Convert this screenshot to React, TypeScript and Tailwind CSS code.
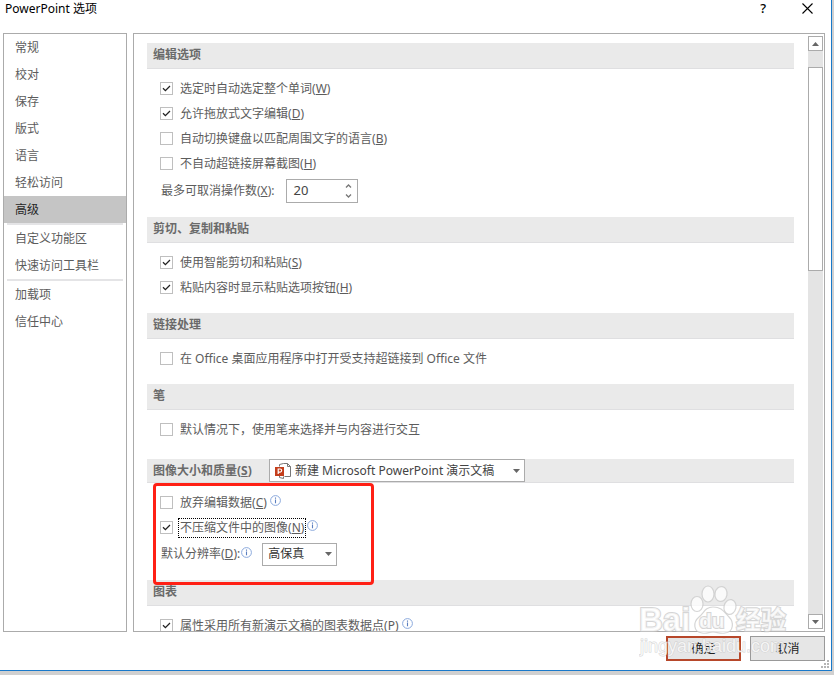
import { useState, type ReactNode } from "react"
import { clsx } from "clsx"

// ── Navigation ────────────────────────────────────────────────────────────────
const navGroups = [
  ["常规", "校对", "保存", "版式", "语言", "轻松访问", "高级"],
  ["自定义功能区", "快速访问工具栏"],
  ["加载项", "信任中心"],
]

function Sidebar() {
  const [active, setActive] = useState("高级")

  return (
    <nav className="w-[124px] shrink-0 border border-[#ababab] bg-white">
      {navGroups.map((group, i) => (
        <div key={group[0]}>
          {i > 0 && <hr className="mx-[3px] h-0.5 border-0 bg-[#e4e4e6]" />}
          {group.map((label) => (
            <button
              key={label}
              type="button"
              onClick={() => setActive(label)}
              className={clsx(
                "block h-[27px] w-full px-[11px] text-left",
                active === label ? "bg-[#c5c5c5] text-[#262626]" : "text-[#5c5c5c]"
              )}
            >
              {label}
            </button>
          ))}
        </div>
      ))}
    </nav>
  )
}

// ── Small pieces ──────────────────────────────────────────────────────────────
function InfoIcon() {
  return (
    <svg className="mb-1 ml-px size-[11px] shrink-0" viewBox="0 0 11 11" fill="none" aria-hidden="true">
      <circle cx="5.5" cy="5.5" r="4.9" stroke="#8aa9dc" />
      <path d="M5.5 4.6v3.6M5.5 2.5v1.2" stroke="#5b7fc0" strokeWidth="1.1" />
    </svg>
  )
}

function PptIcon() {
  return (
    <svg className="size-4" viewBox="0 0 16 16" fill="none" aria-hidden="true">
      <path d="M4.5 3.5v-2l4-1h4l3 3v10h-6" fill="#fff" stroke="#777" />
      <path d="M12.5.5v3h3" stroke="#777" />
      <path d="M4.5 13v1.5l4 1v-2" stroke="#777" />
      <rect x="0" y="4" width="9" height="9" fill="#c43e1c" />
      <path d="M3.2 11V6h1.9a1.5 1.5 0 0 1 0 3.1H3.2" stroke="#fff" strokeWidth="1.2" />
    </svg>
  )
}

function Arrow({ up }: { up?: boolean }) {
  return (
    <svg className="h-1 w-[7px]" viewBox="0 0 7 4" aria-hidden="true">
      <path d={up ? "M0 4 3.5 0 7 4z" : "M0 0h7L3.5 4z"} fill="#666" />
    </svg>
  )
}

function Section({ title, last, children }: { title: ReactNode; last?: boolean; children: ReactNode }) {
  return (
    <section className={clsx("relative", !last && "pb-[13px]")}>
      <h2 className="h-[26px] border-b border-[#dfdfe1] bg-[#eaeaea] px-1.5 leading-6 font-bold text-[#6a6a6a]">
        {title}
      </h2>
      <div className="px-[13px] pt-[7px]">{children}</div>
    </section>
  )
}

interface CheckProps {
  label: string
  hotkey?: string
  checked?: boolean
  info?: boolean
  focused?: boolean
}

function Check({ label, hotkey, checked, info, focused }: CheckProps) {
  return (
    <div className="flex h-[25px] items-center">
      <label className="flex items-center">
        <span className="relative size-[13px]">
          <input
            type="checkbox"
            defaultChecked={checked}
            className="peer block size-[13px] appearance-none border border-[#bfbfbf] bg-white"
          />
          <svg
            className="pointer-events-none absolute inset-0 hidden size-[13px] peer-checked:block"
            viewBox="0 0 13 13"
            fill="none"
          >
            <path d="m3 6.3 2.4 2.4L10 4" stroke="#222" strokeWidth="1.3" />
          </svg>
        </span>
        <span
          className={clsx(
            "ml-[5px] border px-px leading-[18px] whitespace-nowrap",
            focused ? "border-dotted border-black" : "border-transparent"
          )}
        >
          {label}
          {hotkey && (
            <>
              (<u>{hotkey}</u>)
            </>
          )}
        </span>
      </label>
      {info && <InfoIcon />}
    </div>
  )
}

function Spinner() {
  const [value, setValue] = useState(20)

  return (
    <div className="flex h-6 w-[72px] border border-[#ababab] bg-white text-[#444]">
      <input
        id="undo"
        inputMode="numeric"
        value={value}
        onChange={(e) => setValue(Number(e.target.value) || 0)}
        className="w-0 grow pl-1.5 text-[13px] outline-none"
      />
      <div className="flex w-3 flex-col justify-center gap-1.5">
        <button type="button" aria-label="增加" onClick={() => setValue(value + 1)}>
          <svg className="block h-1 w-[7px]" viewBox="0 0 7 4" fill="none">
            <path d="M1 3.5 3.5 1 6 3.5" stroke="#777" strokeWidth="1.3" />
          </svg>
        </button>
        <button type="button" aria-label="减少" onClick={() => setValue(value - 1)}>
          <svg className="block h-1 w-[7px]" viewBox="0 0 7 4" fill="none">
            <path d="M1 .5 3.5 3 6 .5" stroke="#777" strokeWidth="1.3" />
          </svg>
        </button>
      </div>
    </div>
  )
}

// ── Options pane ──────────────────────────────────────────────────────────────
function Options() {
  return (
    <div className="min-w-0 grow overflow-hidden pt-[9px] pr-3.5 pl-[13px]">
      <Section title="编辑选项">
        <Check label="选定时自动选定整个单词" hotkey="W" checked />
        <Check label="允许拖放式文字编辑" hotkey="D" checked />
        <Check label="自动切换键盘以匹配周围文字的语言" hotkey="B" />
        <Check label="不自动超链接屏幕截图" hotkey="H" />
        <div className="flex h-7 items-end gap-3 pb-px pl-px">
          <label htmlFor="undo" className="leading-6">
            最多可取消操作数(<u>X</u>):
          </label>
          <Spinner />
        </div>
      </Section>

      <Section title="剪切、复制和粘贴">
        <Check label="使用智能剪切和粘贴" hotkey="S" checked />
        <Check label="粘贴内容时显示粘贴选项按钮" hotkey="H" checked />
      </Section>

      <Section title="链接处理">
        <Check label="在 Office 桌面应用程序中打开受支持超链接到 Office 文件" />
      </Section>

      <Section title="笔">
        <Check label="默认情况下，使用笔来选择并与内容进行交互" />
      </Section>

      {/* Image size applies per document, so its header carries the picker */}
      <section className="relative pt-1 pb-3">
        <div className="flex h-6 items-center border-b border-[#dfdfe1] bg-[#eaeaea] pl-1.5">
          <label htmlFor="doc" className="w-[116px] font-bold text-[#6a6a6a]">
            图像大小和质量(<u>S</u>)
          </label>
          <div className="relative">
            <select
              id="doc"
              className="block h-[23px] w-[256px] appearance-none border border-[#ababab] bg-white pl-[25px] text-[#444]"
            >
              <option>新建 Microsoft PowerPoint 演示文稿</option>
            </select>
            <span className="pointer-events-none absolute inset-y-0 left-1.5 flex items-center">
              <PptIcon />
            </span>
            <span className="pointer-events-none absolute inset-y-0 right-[5px] flex items-center">
              <Arrow />
            </span>
          </div>
        </div>
        <div className="relative px-[13px] pt-[7px]">
          <Check label="放弃编辑数据" hotkey="C" info />
          <Check label="不压缩文件中的图像" hotkey="N" checked info focused />
          <div className="flex h-7 items-center pl-px">
            <label htmlFor="dpi">
              默认分辨率(<u>D</u>):
            </label>
            <InfoIcon />
            <div className="relative ml-2.5">
              <select
                id="dpi"
                className="block h-[23px] w-[75px] appearance-none border border-[#ababab] bg-white pl-[5px] text-[#333]"
              >
                <option>高保真</option>
              </select>
              <span className="pointer-events-none absolute inset-y-0 right-[5px] flex items-center">
                <Arrow />
              </span>
            </div>
          </div>
          <div className="pointer-events-none absolute top-0 left-1.5 z-10 h-[102px] w-[221px] rounded-sm border-3 border-[#ff2015]" />
        </div>
      </section>

      <Section title="图表" last>
        <Check label="属性采用所有新演示文稿的图表数据点" hotkey="P" checked info />
      </Section>
    </div>
  )
}

function Scrollbar() {
  return (
    <div className="mt-0.5 mr-px mb-0.5 flex w-[15px] shrink-0 flex-col bg-[#e4e4e4]">
      <button type="button" aria-label="向上" className="flex h-[15px] items-center justify-center border border-[#ababab] bg-white">
        <Arrow up />
      </button>
      <div className="mt-4 h-[204px] border border-[#ababab] bg-white" />
      <button type="button" aria-label="向下" className="mt-auto flex h-[15px] items-center justify-center border border-[#ababab] bg-white">
        <Arrow />
      </button>
    </div>
  )
}

function Watermark() {
  return (
    <svg
      className="pointer-events-none absolute right-10 bottom-3 z-20 h-[76px] w-[152px]"
      viewBox="0 0 152 76"
      fill="#fff"
      fillOpacity=".75"
      stroke="#c8c8c8"
      strokeOpacity=".75"
      strokeWidth="1.2"
      fontFamily="'Liberation Sans', 'Noto Sans CJK SC', sans-serif"
      fontWeight="700"
    >
      <ellipse cx="58" cy="22" rx="6" ry="7.5" />
      <ellipse cx="69" cy="12" rx="6" ry="8" />
      <ellipse cx="82" cy="12" rx="6" ry="7.5" transform="rotate(10 82 12)" />
      <ellipse cx="91" cy="25" rx="6" ry="7.5" transform="rotate(12 91 25)" />
      <path d="M74 25c-8 0-9 6-14 10-6 5-6 15 3 16 5 1 7-1 11-1s7 2 12 1c9-1 9-11 4-16s-7-10-16-10z" />
      <g paintOrder="stroke" strokeWidth="2">
        <text x="0" y="49" fontSize="33">Bai</text>
        <text x="60" y="46" fontSize="21">du</text>
        <text x="97" y="47" fontSize="25">经验</text>
      </g>
      <text x="1" y="70" fontSize="18" fontWeight="400" strokeWidth="1" paintOrder="stroke">
        jingyan.baidu.com
      </text>
    </svg>
  )
}

export default function App() {
  return (
    <div className="h-screen overflow-hidden bg-[#d0d0d0] pr-0.5 pb-1 font-['Noto_Sans','Noto_Sans_CJK_SC',sans-serif] text-xs text-[#5c5c5c]">
      <div className="relative flex h-full flex-col border-r border-b border-[#1979ca] bg-white">
        <header className="flex h-[33px] shrink-0 items-start pr-[18px] pl-[5px] text-black">
          <h1 className="grow leading-[17px]">PowerPoint 选项</h1>
          <button type="button" aria-label="帮助" className="mr-9 text-[13px] leading-[17px] font-medium">
            ?
          </button>
          <button type="button" aria-label="关闭" className="pt-[3px]">
            <svg className="size-[11px]" viewBox="0 0 11 11" fill="none">
              <path d="m.5.5 10 10m0-10-10 10" stroke="#000" strokeWidth="1.1" />
            </svg>
          </button>
        </header>

        <div className="flex min-h-0 grow gap-1.5 pr-1.5 pl-[3px]">
          <Sidebar />
          <main className="flex min-w-0 grow border border-[#ababab]">
            <Options />
            <Scrollbar />
          </main>
        </div>

        <footer className="flex shrink-0 justify-end gap-[9px] pt-1 pr-1.5 pb-[9px] text-[#222]">
          <button type="button" className="h-[25px] w-[75px] border-2 border-[#b7472a] bg-[#e6e6e6]">
            确定
          </button>
          <button type="button" className="h-[25px] w-[75px] border border-[#999] bg-[#e6e6e6]">
            取消
          </button>
        </footer>

        <svg className="absolute right-0.5 bottom-0.5 size-2" viewBox="0 0 8 8" fill="#b5b5b5" aria-hidden="true">
          <path d="M6 0h2v2H6zM3 3h2v2H3zM6 3h2v2H6zM0 6h2v2H0zM3 6h2v2H3zM6 6h2v2H6z" />
        </svg>
        <Watermark />
      </div>
    </div>
  )
}
